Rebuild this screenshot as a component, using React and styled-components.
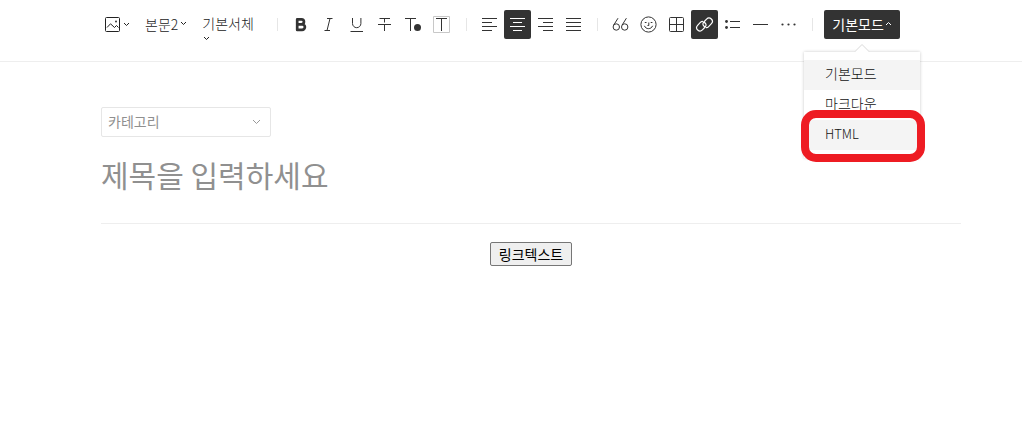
import React from 'react';
import styled, { createGlobalStyle } from 'styled-components';

const GlobalStyle = createGlobalStyle`
  body {
    margin: 0;
    background: #fff;
    color: #333;
  }
  body, button, input, select {
    font-family: 'Noto Sans CJK KR', 'Noto Sans', sans-serif;
    font-size: 14px;
    font-weight: 400;
  }
`;

const Header = styled.header`
  box-sizing: border-box;
  height: 62px;
  padding: 10px 0 0 101px;
  border-bottom: 1px solid #eee;
`;

const Toolbar = styled.div`
  display: flex;
  align-items: flex-start;
`;

const DropGroup = styled.div`
  display: flex;
  gap: 15px;
`;

const DropButton = styled.button`
  display: flex;
  align-items: center;
  gap: 2px;
  height: 29px;
  padding: 0 0 2px;
  border: 0;
  background: none;
  color: #222;
  font-weight: 300;
  line-height: 26px;
  white-space: nowrap;
  cursor: pointer;
`;

const ImageButton = styled(DropButton)`
  padding: 0 0 0 4px;
`;

const FontButton = styled(DropButton)`
  flex-wrap: wrap;
  align-content: flex-start;
  gap: 0;
  width: 56px;
  height: 36px;
  padding-top: 6px;
  line-height: 14px;
  svg {
    margin: 6px 0 0 1px;
  }
`;

const Divider = styled.span`
  flex: none;
  width: 1px;
  height: 13px;
  margin: 8px 9px 0 10px;
  background: #e6e6e6;
`;

const WideDivider = styled(Divider)`
  margin-left: ${(props) => props.$before}px;
`;

const ButtonGroup = styled.div`
  display: flex;
  gap: 1px;
`;

const IconButton = styled.button`
  width: 27px;
  height: 29px;
  padding: 0;
  border: 0;
  border-radius: 2px;
  background: ${(props) => (props.$active ? '#333' : 'transparent')};
  color: ${(props) => (props.$active ? '#fff' : '#333')};
  cursor: pointer;
  svg {
    display: block;
  }
`;

const ModeBox = styled.div`
  position: relative;
  margin-left: 2px;
`;

const ModeButton = styled(DropButton)`
  gap: 1px;
  padding: 0 8px 2px;
  border-radius: 2px;
  background: #333;
  color: #fff;
  font-weight: 400;
`;

const ModeMenu = styled.ul`
  position: absolute;
  top: 42px;
  left: 50%;
  z-index: 1;
  width: 116px;
  margin: 0;
  padding: 8px 0;
  list-style: none;
  transform: translateX(-50%);
  background: #fff;
  box-shadow: 0 0 3px rgba(0, 0, 0, 0.22);
`;

const MenuArrow = styled.svg`
  position: absolute;
  top: -9px;
  left: 50%;
  transform: translateX(-50%);
`;

const MenuButton = styled.button`
  display: block;
  width: 100%;
  height: 30px;
  padding: 0 21px 4px;
  border: 0;
  background: ${(props) => (props.$shaded ? '#f4f4f4' : '#fff')};
  color: #111;
  font-weight: 300;
  line-height: 26px;
  text-align: left;
  cursor: pointer;
`;

const LatinLabel = styled.span`
  font-size: 13px;
`;

const Highlight = styled.span`
  position: absolute;
  box-sizing: border-box;
  top: 58px;
  left: -3px;
  right: -5px;
  height: 52px;
  border: 8px solid #ee1c23;
  border-radius: 15px;
  pointer-events: none;
`;

const Editor = styled.main`
  padding: 45px 61px 0 101px;
`;

const CategoryBox = styled.div`
  position: relative;
  width: 170px;
  svg {
    position: absolute;
    top: 12px;
    right: 10px;
    pointer-events: none;
  }
`;

const CategorySelect = styled.select`
  display: block;
  box-sizing: border-box;
  width: 100%;
  height: 30px;
  padding: 0 24px 2px 6px;
  appearance: none;
  border: 1px solid #e6e6e6;
  border-radius: 2px;
  background: #fff;
  color: #909090;
`;

const TitleInput = styled.input`
  display: block;
  box-sizing: border-box;
  width: 100%;
  height: 87px;
  padding: 0 0 13px;
  border: 0;
  border-bottom: 1px solid #eee;
  outline: 0;
  background: transparent;
  color: #333;
  font-size: 30px;
  &::placeholder {
    color: #909090;
    opacity: 1;
  }
`;

const EditorBody = styled.div`
  padding-top: 18px;
  text-align: center;
`;

const LinkTextButton = styled.button`
  height: 24px;
  padding: 0 8px;
  border: 1px solid #767676;
  border-radius: 2px;
  background: #efefef;
  color: #000;
  line-height: 20px;
`;

const Caret = ({ up }) => (
  <svg width="7" height="5" viewBox="0 0 7 5" fill="none" stroke="currentColor">
    <path d={up ? 'M1 4l2.5-2.5L6 4' : 'M1 1l2.5 2.5L6 1'} />
  </svg>
);

const Icon = ({ children }) => (
  <svg width="27" height="29" viewBox="0 0 27 29" fill="none" stroke="currentColor">
    {children}
  </svg>
);

const textTools = [
  {
    label: '굵게',
    icon: (
      <path
        strokeWidth="2.7"
        strokeLinejoin="round"
        d="M10.2 9.4h4.3a2.4 2.4 0 0 1 0 4.9h-4.3zM10.2 14.3h4.9a2.8 2.8 0 0 1 0 5.6h-4.9z"
      />
    ),
  },
  { label: '기울임', icon: <path d="M12 8.5h5.5M9.5 20.5H15M15 8.5l-3 12" /> },
  { label: '밑줄', icon: <path d="M9.5 8v5.5a4.2 4.2 0 0 0 8.4 0V8M7.5 21.5h12.5" /> },
  { label: '취소선', icon: <path d="M8.5 8.5h10.5M13.5 8.5v4M13.5 14.5v6.5M7 14.5h13" /> },
  {
    label: '글자색',
    icon: (
      <>
        <path d="M6 8.5h11M11.5 8.5v12.5" />
        <circle cx="18.5" cy="17.5" r="3.5" fill="currentColor" stroke="none" />
      </>
    ),
  },
  {
    label: '배경색',
    icon: (
      <>
        <path d="M6.5 6.5h16v16h-16z" stroke="#c8c8c8" />
        <path d="M9 8.5h11M14.5 8.5V21" />
      </>
    ),
  },
];

const alignTools = [
  { label: '왼쪽 정렬', icon: <path d="M6 8.5h15M6 12.5h10M6 16.5h15M6 20.5h10" /> },
  {
    label: '가운데 정렬',
    active: true,
    icon: <path d="M6 8.5h15M9 12.5h9M6 16.5h15M9 20.5h9" />,
  },
  { label: '오른쪽 정렬', icon: <path d="M6 8.5h15M11 12.5h10M6 16.5h15M11 20.5h10" /> },
  { label: '양쪽 정렬', icon: <path d="M6 8.5h15M6 12.5h15M6 16.5h15M6 20.5h15" /> },
];

const insertTools = [
  {
    label: '인용구',
    icon: (
      <>
        <circle cx="9.3" cy="17" r="3.2" />
        <circle cx="17.7" cy="17" r="3.2" />
        <path d="M11 8.2l-4.3 6.9M19.4 8.2l-4.3 6.9" />
      </>
    ),
  },
  {
    label: '이모티콘',
    icon: (
      <>
        <circle cx="13.5" cy="14.5" r="7.6" />
        <path d="M9.4 15.8c1.4 3.8 6.8 3.8 8.2 0M13.8 12.5v3h-1.3" />
        <path d="M9.8 12.5h1.7M15.7 12.5h1.7" strokeWidth="1.2" />
      </>
    ),
  },
  {
    label: '표',
    icon: (
      <>
        <rect x="6.5" y="7.5" width="14" height="14" rx="1" />
        <path d="M13.5 7.5v14M6.5 14.5h14" />
      </>
    ),
  },
  {
    label: '링크',
    active: true,
    icon: (
      <g strokeWidth="1.2" strokeLinecap="round">
        <path d="M13.8 16.6c-2-.9-2.5-3-1-4.6l2.8-2.9a3.3 3.3 0 0 1 4.8 4.6l-3 3.1c-.6.6-1.3.9-2 .9" />
        <path d="M13.2 12.4c2 .9 2.5 3 1 4.6l-2.8 2.9a3.3 3.3 0 0 1-4.8-4.6l3-3.1c.6-.6 1.3-.9 2-.9" />
      </g>
    ),
  },
  {
    label: '목록',
    icon: (
      <>
        <path d="M11 11.5h10M11 17.5h10" />
        <circle cx="7.5" cy="11.5" r="1.4" fill="currentColor" stroke="none" />
        <circle cx="7.5" cy="17.5" r="1.4" fill="currentColor" stroke="none" />
      </>
    ),
  },
  { label: '구분선', icon: <path d="M6 14.5h15" /> },
  {
    label: '더보기',
    icon: (
      <g fill="currentColor" stroke="none">
        <circle cx="7.5" cy="14.5" r="1.1" />
        <circle cx="13.5" cy="14.5" r="1.1" />
        <circle cx="19.5" cy="14.5" r="1.1" />
      </g>
    ),
  },
];

const ToolButtons = ({ tools }) => (
  <ButtonGroup>
    {tools.map(({ label, active, icon }) => (
      <IconButton key={label} type="button" aria-label={label} $active={active}>
        <Icon>{icon}</Icon>
      </IconButton>
    ))}
  </ButtonGroup>
);

const ModeSelector = () => (
  <ModeBox>
    <ModeButton type="button" aria-expanded="true">
      기본모드
      <Caret up />
    </ModeButton>
    <ModeMenu>
      <MenuArrow width="16" height="10" viewBox="0 0 16 10">
        <path d="M0 9l8-8 8 8v1H0z" fill="#fff" />
        <path d="M.5 9L8 1.5 15.5 9" fill="none" stroke="#d8d8d8" />
      </MenuArrow>
      <li>
        <MenuButton type="button" $shaded>
          기본모드
        </MenuButton>
      </li>
      <li>
        <MenuButton type="button">마크다운</MenuButton>
      </li>
      <li>
        <MenuButton type="button" $shaded>
          <LatinLabel>HTML</LatinLabel>
        </MenuButton>
      </li>
      <Highlight as="li" />
    </ModeMenu>
  </ModeBox>
);

const EditorHeader = () => (
  <Header>
    <Toolbar>
      <DropGroup>
        <ImageButton type="button" aria-label="사진">
          <svg width="16" height="16" viewBox="0 0 16 16" fill="none" stroke="currentColor">
            <rect x=".5" y=".5" width="14" height="14" rx="1" />
            <path d="M2 10.5l3.5-3.7 4 3.7 2-2 2 2" />
            <circle cx="11" cy="4.5" r=".9" fill="currentColor" stroke="none" />
          </svg>
          <Caret />
        </ImageButton>
        <DropButton type="button">
          본문2
          <Caret />
        </DropButton>
        <FontButton type="button">
          기본서체
          <Caret />
        </FontButton>
      </DropGroup>
      <WideDivider $before={19} />
      <ToolButtons tools={textTools} />
      <WideDivider $before={12} />
      <ToolButtons tools={alignTools} />
      <Divider />
      <ToolButtons tools={insertTools} />
      <Divider />
      <ModeSelector />
    </Toolbar>
  </Header>
);

const App = () => {
  return (
    <>
      <GlobalStyle />
      <EditorHeader />
      <Editor>
        <CategoryBox>
          <CategorySelect aria-label="카테고리">
            <option>카테고리</option>
          </CategorySelect>
          <svg width="9" height="6" viewBox="0 0 9 6" fill="none" stroke="#999">
            <path d="M1 1l3.5 3.5L8 1" />
          </svg>
        </CategoryBox>
        <TitleInput type="text" aria-label="제목" placeholder="제목을 입력하세요" />
        <EditorBody>
          <LinkTextButton type="button">링크텍스트</LinkTextButton>
        </EditorBody>
      </Editor>
    </>
  );
};

export default App;
